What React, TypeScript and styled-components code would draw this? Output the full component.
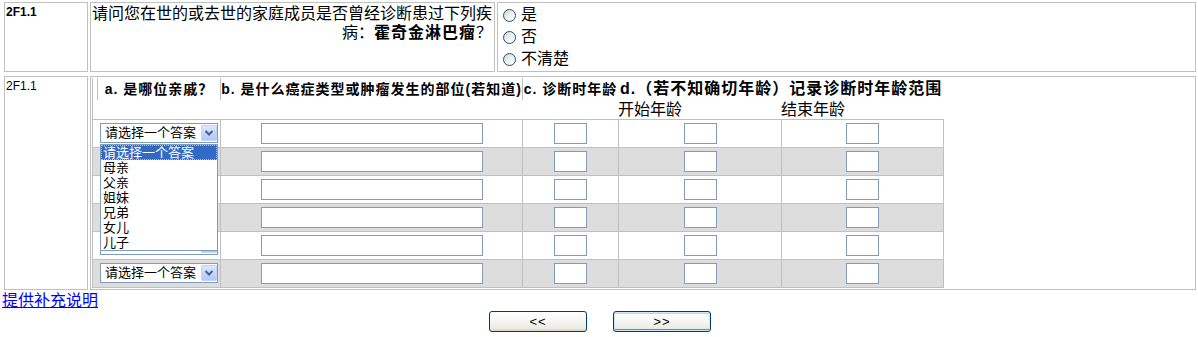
import React from "react";
import styled, { createGlobalStyle } from "styled-components";

const GRID = "#c0c0c0";
const FIELD = "#7f9db9";
const CJK = `"Liberation Sans", "Noto Sans CJK SC", sans-serif`;

const GlobalStyle = createGlobalStyle`
  html, body { margin: 0; padding: 0; background: #fff; }
  body { font-family: ${CJK}; color: #000; }
  * { box-sizing: border-box; }
`;

const Page = styled.div`
  padding-left: 2px;
  width: 1198px;
`;

const QuestionTable = styled.div`
  width: 1196px;
  display: grid;
  grid-template-columns: 84px 405px 1fr;
  gap: 2px;
  padding: 2px;
`;

const SectionTable = styled.div`
  width: 1196px;
  display: grid;
  grid-template-columns: 84px 1fr;
  gap: 2px;
  padding: 2px;
`;

const Cell = styled.div`
  border: 1px solid ${GRID};
  background: #fff;
`;

const CodeCell = styled(Cell)<{ $bold?: boolean }>`
  padding: 2px 1px;
  font-family: "Liberation Sans", Arial, sans-serif;
  font-size: 12px;
  line-height: 14px;
  font-weight: ${(p) => (p.$bold ? "bold" : "normal")};
`;

const QuestionCell = styled(Cell)`
  padding: 1px 2px 1px 1px;
  text-align: right;
  font-size: 16px;
  line-height: 19px;
  white-space: nowrap;
`;

const Emph = styled.b`
  font-weight: bold;
  letter-spacing: 1px;
`;

const AnswerCell = styled(Cell)`
  padding: 1px 0;
  display: flex;
  flex-direction: column;
`;

const Option = styled.label`
  height: 22px;
  display: flex;
  align-items: center;
  font-size: 16px;
  line-height: 18px;
`;

const Radio = styled.input.attrs({ type: "radio" })`
  appearance: none;
  -webkit-appearance: none;
  width: 13px;
  height: 13px;
  margin: 0 5px 0 5px;
  border-radius: 50%;
  border: 1px solid #1c5180;
  background: linear-gradient(135deg, #d6d6cf 0%, #eeeeea 45%, #ffffff 100%);
`;

const BigCell = styled(Cell)`
  padding: 1px;
`;

const InnerTable = styled.div`
  position: relative;
  width: 852px;
  border-left: 1px solid ${GRID};
`;

const HeaderRow = styled.div`
  display: grid;
  grid-template-columns: 4px 123px 302px 96px 326px;
  height: 22px;
`;

const HeaderCell = styled.div<{ $plain?: boolean; $large?: boolean }>`
  display: flex;
  align-items: center;
  justify-content: ${(p) => (p.$plain ? "flex-start" : "center")};
  padding: ${(p) => (p.$plain ? "0 0 1px 2px" : "0 0 1px 0")};
  border-left: ${(p) => (p.$plain ? "none" : `1px solid ${GRID}`)};
  font-weight: bold;
  font-size: ${(p) => (p.$large ? "16px" : "14px")};
  letter-spacing: 1px;
  line-height: 20px;
  white-space: nowrap;
`;

const SubHeaderRow = styled.div`
  display: grid;
  grid-template-columns: 127px 302px 96px 163px 162px;
  height: 19px;
`;

const SubHeaderCell = styled.div`
  font-size: 16px;
  line-height: 19px;
  white-space: nowrap;
`;

const DataBlock = styled.div`
  width: 851px;
  border-right: 1px solid ${GRID};
  border-bottom: 1px solid ${GRID};
`;

const DataRow = styled.div<{ $shade: boolean }>`
  display: grid;
  grid-template-columns: 127px 302px 96px 163px 162px;
  height: 28px;
  border-top: 1px solid ${GRID};
  background: ${(p) => (p.$shade ? "#dddddd" : "#ffffff")};
`;

const DataCell = styled.div<{ $first?: boolean }>`
  display: flex;
  align-items: center;
  justify-content: ${(p) => (p.$first ? "flex-start" : "center")};
  padding-left: ${(p) => (p.$first ? "7px" : "0")};
  border-left: ${(p) => (p.$first ? "none" : `1px solid ${GRID}`)};
`;

const SelectBox = styled.div`
  position: relative;
  width: 118px;
  height: 20px;
  margin-bottom: 1px;
  border: 1px solid ${FIELD};
  background: #fff;
  display: flex;
  align-items: center;
  padding-left: 4px;
  font-size: 13px;
  line-height: 16px;
  white-space: nowrap;
`;

const SelectText = styled.span`
  flex: 1;
`;

const SelectArrow = styled.span`
  width: 16px;
  height: 16px;
  border: 1px solid #c3d3fd;
  border-radius: 1px;
  background: linear-gradient(180deg, #dce7fe 0%, #c6d6fc 50%, #b4c8f6 100%);
  display: flex;
  align-items: center;
  justify-content: center;
`;

const ListBox = styled.div`
  position: absolute;
  z-index: 2;
  top: 20px;
  left: -1px;
  width: 118px;
  height: 107px;
  border: 1px solid ${FIELD};
  background: #fff;
`;

const ListItem = styled.div<{ $active?: boolean }>`
  height: 15px;
  line-height: 15px;
  padding-left: 2px;
  font-size: 13px;
  color: ${(p) => (p.$active ? "#fff" : "#000")};
  background: ${(p) => (p.$active ? "#316ac5" : "transparent")};
  outline: ${(p) => (p.$active ? "1px dotted #e8b84a" : "none")};
  outline-offset: -1px;
`;

const TextInput = styled.input.attrs({ type: "text" })<{ $w: number }>`
  width: ${(p) => p.$w}px;
  height: 21px;
  margin: 0;
  padding: 0 2px;
  border: 1px solid ${FIELD};
  background: #fff;
  outline: none;
  font-size: 13px;
`;

const SupplementLink = styled.a`
  display: inline-block;
  color: #0000ff;
  text-decoration: underline;
  font-size: 16px;
  line-height: 18px;
`;

const ButtonBar = styled.div`
  width: 1196px;
  margin-top: 1px;
  display: flex;
  justify-content: center;
  gap: 26px;
`;

const NavButton = styled.button<{ $focus?: boolean }>`
  width: 98px;
  height: 21px;
  margin: 0;
  padding: 0;
  border: 1px solid #003c74;
  border-radius: 3px;
  background: linear-gradient(180deg, #ffffff 0%, #f6f6f2 50%, #ecebe5 85%, #d8d3c8 100%);
  box-shadow: ${(p) =>
    p.$focus ? "inset 0 0 0 1px #cee7ff, inset 0 -2px 0 #6982ee, inset 0 2px 0 #bcd4f6" : "none"};
  font-family: "Liberation Sans", Arial, sans-serif;
  font-size: 13px;
  letter-spacing: 1px;
  line-height: 19px;
  color: #000;
`;

const Chevron = () => (
  <svg width="10" height="8" viewBox="0 0 10 8">
    <polyline points="1.5,2 5,5.5 8.5,2" fill="none" stroke="#4d6185" strokeWidth="2" />
  </svg>
);

const OPTIONS = ["请选择一个答案", "母亲", "父亲", "姐妹", "兄弟", "女儿", "儿子"];

const Select = ({ open, covered }: { open?: boolean; covered?: boolean }) => (
  <SelectBox>
    <SelectText>{covered ? "" : "请选择一个答案"}</SelectText>
    <SelectArrow>
      <Chevron />
    </SelectArrow>
    {open && (
      <ListBox>
        {OPTIONS.map((o, i) => (
          <ListItem key={o} $active={i === 0}>
            {o}
          </ListItem>
        ))}
      </ListBox>
    )}
  </SelectBox>
);

export default function App() {
  const rows = [0, 1, 2, 3, 4, 5];
  return (
    <>
      <GlobalStyle />
      <Page>
        <QuestionTable>
          <CodeCell $bold>2F1.1</CodeCell>
          <QuestionCell>
            请问您在世的或去世的家庭成员是否曾经诊断患过下列疾
            <br />
            病：<Emph>霍奇金淋巴瘤</Emph>？
          </QuestionCell>
          <AnswerCell>
            <Option>
              <Radio name="q1" />是
            </Option>
            <Option>
              <Radio name="q1" />否
            </Option>
            <Option>
              <Radio name="q1" />不清楚
            </Option>
          </AnswerCell>
        </QuestionTable>

        <SectionTable>
          <CodeCell>2F1.1</CodeCell>
          <BigCell>
            <InnerTable>
              <HeaderRow>
                <HeaderCell $plain />
                <HeaderCell>a. 是哪位亲戚？</HeaderCell>
                <HeaderCell>b. 是什么癌症类型或肿瘤发生的部位(若知道)</HeaderCell>
                <HeaderCell>c. 诊断时年龄</HeaderCell>
                <HeaderCell $plain $large>
                  d.（若不知确切年龄）记录诊断时年龄范围
                </HeaderCell>
              </HeaderRow>
              <SubHeaderRow>
                <div />
                <div />
                <div />
                <SubHeaderCell>开始年龄</SubHeaderCell>
                <SubHeaderCell>结束年龄</SubHeaderCell>
              </SubHeaderRow>
              <DataBlock>
                {rows.map((r) => (
                  <DataRow key={r} $shade={r % 2 === 1}>
                    <DataCell $first>
                      <Select open={r === 0} covered={r >= 1 && r <= 4} />
                    </DataCell>
                    <DataCell>
                      <TextInput $w={222} />
                    </DataCell>
                    <DataCell>
                      <TextInput $w={33} />
                    </DataCell>
                    <DataCell>
                      <TextInput $w={33} />
                    </DataCell>
                    <DataCell>
                      <TextInput $w={33} />
                    </DataCell>
                  </DataRow>
                ))}
              </DataBlock>
            </InnerTable>
          </BigCell>
        </SectionTable>

        <SupplementLink href="#">提供补充说明</SupplementLink>
        <ButtonBar>
          <NavButton>&lt;&lt;</NavButton>
          <NavButton $focus>&gt;&gt;</NavButton>
        </ButtonBar>
      </Page>
    </>
  );
}
